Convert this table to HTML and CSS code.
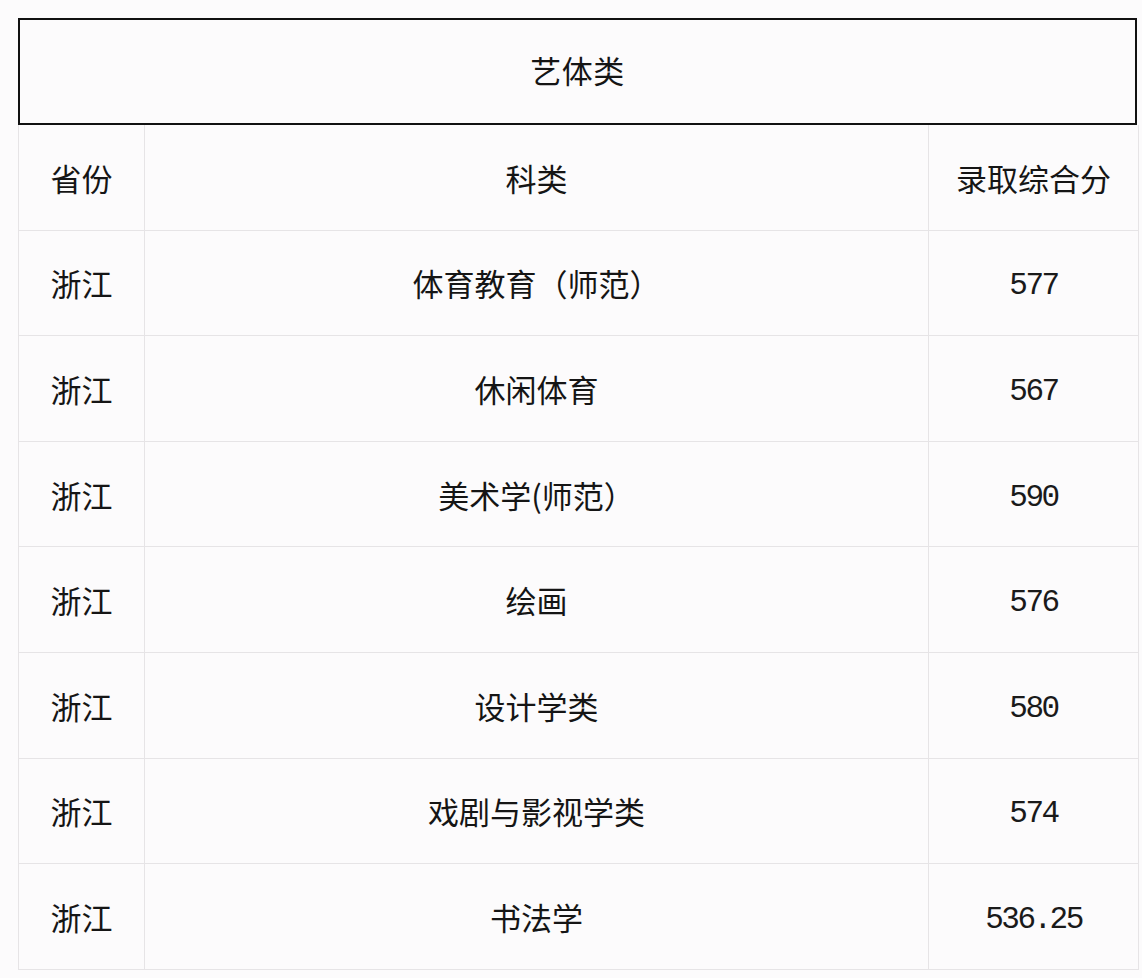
FILE: index.html
```html
<!DOCTYPE html>
<html lang="zh-CN">
<head>
<meta charset="utf-8">
<title>艺体类</title>
<link rel="stylesheet" href="styles.css">
</head>
<body>
<div class="wrap">
  <div class="title">艺体类</div>
  <table class="grid">
    <colgroup><col class="c1"><col class="c2"><col class="c3"></colgroup>
    <tr><td>省份</td><td>科类</td><td>录取综合分</td></tr>
    <tr><td>浙江</td><td>体育教育（师范）</td><td class="num">577</td></tr>
    <tr><td>浙江</td><td>休闲体育</td><td class="num">567</td></tr>
    <tr><td>浙江</td><td>美术学(师范）</td><td class="num">590</td></tr>
    <tr><td>浙江</td><td>绘画</td><td class="num">576</td></tr>
    <tr><td>浙江</td><td>设计学类</td><td class="num">580</td></tr>
    <tr><td>浙江</td><td>戏剧与影视学类</td><td class="num">574</td></tr>
    <tr><td>浙江</td><td>书法学</td><td class="num">536.25</td></tr>
  </table>
</div>
</body>
</html>
```
FILE: styles.css
```css
html, body {
  margin: 0;
  padding: 0;
  background: #fcfbfc;
}
body {
  font-family: "Noto Sans CJK SC", "Noto Sans", sans-serif;
  color: #151515;
}
.wrap {
  padding: 18px 0 0 18px;
  width: 1120px;
}
.title {
  box-sizing: border-box;
  width: 1119px;
  height: 107px;
  padding-bottom: 4px;
  border: 2px solid #111;
  display: flex;
  align-items: center;
  justify-content: center;
  font-size: 31px;
  letter-spacing: 0.5px;
}
.grid {
  border-collapse: collapse;
  width: 1120px;
  table-layout: fixed;
}
.c1 { width: 126px; }
.c2 { width: 784px; }
.c3 { width: 210px; }
.grid td {
  border: 1px solid #e6e4e6;
  height: 104.6px;
  padding: 0;
  text-align: center;
  vertical-align: middle;
  font-size: 31px;
  line-height: 1;
}
.grid tr:first-child td { border-top: none; }
.grid td.num {
  font-family: "Liberation Mono", monospace;
  font-size: 31px;
  letter-spacing: -2.5px;
  padding-top: 6px;
  height: 98.6px;
  color: #1a1a1a;
}
```
